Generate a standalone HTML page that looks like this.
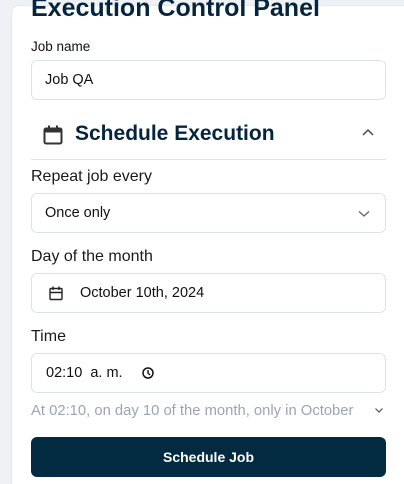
<!DOCTYPE html>
<html><head><style>
*{box-sizing:border-box;margin:0;padding:0}
html,body{width:404px;height:484px;overflow:hidden}
body{background:#eef2f7;font-family:"Liberation Sans",sans-serif;color:#0f2233;position:relative}
.card{position:absolute;left:11px;top:5px;width:420px;height:490px;background:#fff;border-radius:8px;border:1px solid #e3e8ef}
.abs{position:absolute}
.title{left:31px;top:-6px;font-size:25px;font-weight:bold;color:#04253d;white-space:nowrap}
.lbl{left:31px;font-size:13.5px;color:#111}
.lbl2{left:31px;font-size:16px;color:#1a1a1a}
.inp{left:31px;width:355px;height:40px;border:1px solid #dde2ea;border-radius:6px;background:#fff;font-size:14.5px;color:#111}
.inp span{position:absolute;top:11px}
</style></head><body>
<div class="card"></div>
<div class="abs title">Execution Control Panel</div>
<div class="abs lbl" style="top:39px">Job name</div>
<div class="abs inp" style="top:60px"><span style="left:13px">Job QA</span></div>
<svg class="abs" style="left:43px;top:125px" width="20" height="20" viewBox="0 0 20 20"><rect x="1.5" y="3.5" width="17" height="15" rx="1.5" fill="none" stroke="#333" stroke-width="2"/><rect x="1.5" y="3.5" width="17" height="4" fill="#333"/><rect x="5" y="0.5" width="2" height="4" fill="#333"/><rect x="13" y="0.5" width="2" height="4" fill="#333"/></svg>
<div class="abs" style="left:75px;top:122px;font-size:21px;font-weight:bold;color:#04253d">Schedule Execution</div>
<svg class="abs" style="left:361px;top:128px" width="14" height="10" viewBox="0 0 14 10"><path d="M2 7 L7 2 L12 7" fill="none" stroke="#444" stroke-width="1.4"/></svg>
<div class="abs" style="left:31px;top:159px;width:355px;height:1px;background:#dde5ee"></div>
<div class="abs lbl2" style="top:168px">Repeat job every</div>
<div class="abs inp" style="top:193px"><span style="left:13px">Once only</span>
<svg class="abs" style="left:326px;top:16px" width="12" height="8" viewBox="0 0 12 8"><path d="M1 1.5 L6 6 L11 1.5" fill="none" stroke="#666" stroke-width="1.3"/></svg></div>
<div class="abs lbl2" style="top:248px">Day of the month</div>
<div class="abs inp" style="top:273px">
<svg class="abs" style="left:17px;top:12px" width="14" height="15" viewBox="0 0 14 15"><rect x="1" y="2.5" width="12" height="11" rx="1" fill="none" stroke="#222" stroke-width="1.4"/><path d="M1 6.5 H13 M4 0.5 V4 M10 0.5 V4" stroke="#222" stroke-width="1.4"/></svg>
<span style="left:48px">October 10th, 2024</span></div>
<div class="abs lbl2" style="top:328px">Time</div>
<div class="abs inp" style="top:353px"><span style="left:14px">02:10&nbsp; a. m.</span>
<svg class="abs" style="left:110px;top:13px" width="12" height="12" viewBox="0 0 12 12"><circle cx="6" cy="6" r="5" fill="none" stroke="#111" stroke-width="1.5"/><path d="M6 3 V6 L8 8" fill="none" stroke="#111" stroke-width="1.4"/></svg></div>
<div class="abs" style="left:31px;top:403px;font-size:14.8px;color:#9ca4b4;white-space:nowrap">At 02:10, on day 10 of the month, only in October</div>
<svg class="abs" style="left:374px;top:407px" width="10" height="7" viewBox="0 0 10 7"><path d="M1.5 1.5 L5 5 L8.5 1.5" fill="none" stroke="#555" stroke-width="1.2"/></svg>
<div class="abs" style="left:31px;top:437px;width:355px;height:40px;background:#022b42;border-radius:6px;color:#fff;font-size:14px;font-weight:bold;text-align:center;line-height:40px">Schedule Job</div>
</body></html>
